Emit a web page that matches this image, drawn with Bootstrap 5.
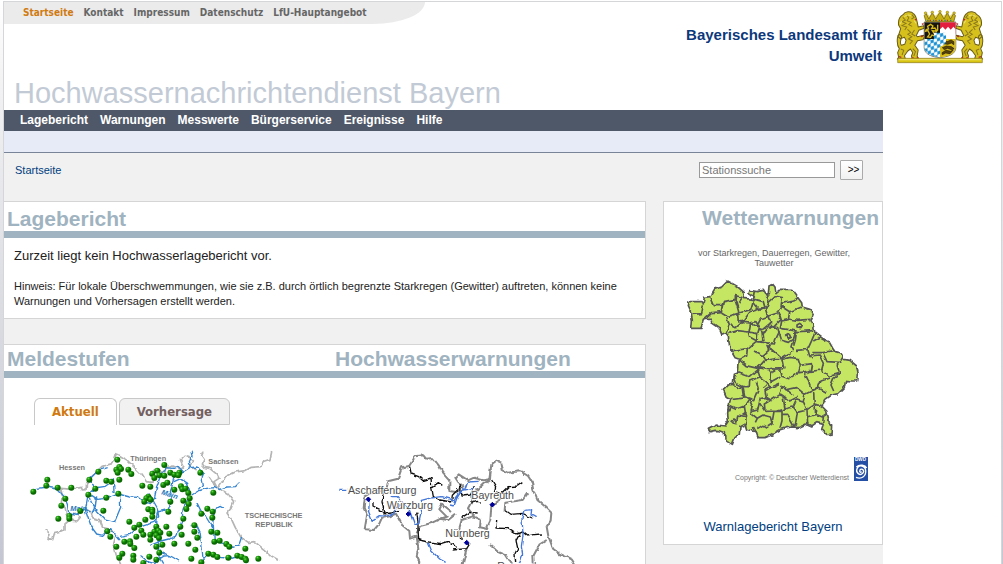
<!DOCTYPE html>
<html lang="de">
<head>
<meta charset="utf-8">
<meta name="viewport" content="width=device-width, initial-scale=1">
<title>Hochwassernachrichtendienst Bayern</title>
<link href="https://cdn.jsdelivr.net/npm/bootstrap@5.3.0/dist/css/bootstrap.min.css" rel="stylesheet">
<style>
body{font-family:"Liberation Sans",Arial,sans-serif;font-size:11px;line-height:15px;color:#222;background:linear-gradient(#fff,#f0f0f2 100px,#dcdde3 300px,#c4c6d2 564px)}
a{text-decoration:none}
svg{display:block;flex:none}
.shell{height:100vh;overflow:hidden;padding:1px 1px 0 3px}
.sheet{min-height:100%;border:1px solid #d5d6d8;border-bottom:0;background:#fff}
.side{width:118px;flex:none}
.masthead{height:108px}
.emblem{padding:8px 0 0 13px}
.meta{width:421px;height:22px;background:#ebebeb;border-bottom-right-radius:52px 22px;padding-left:19px;gap:10px;font:bold 10px/22px "DejaVu Sans Condensed","DejaVu Sans",sans-serif}
.meta a{color:#666}
.meta a.current,.tabs button.current{color:#d07a10}
.title{font-size:29px;line-height:34px;color:#c2cad5;margin:0;padding-left:10px;font-weight:400}
.agency{width:210px;font-size:15px;line-height:21px;font-weight:700;color:#0d387c;padding-top:22px;padding-right:1px}
.menu{background:#4f5869;height:21px;padding-left:16px;gap:12px;font:bold 12px/20px "Liberation Sans",Arial,sans-serif}
.menu a{color:#fff}
.submenu{height:22px;background:#e7ebf7;border-bottom:1px solid #7a8499}
.workspace{background:#f1f1f1}
.crumbs{height:48px;padding:7px 20px 0 11px}
.crumbs a{padding-top:3px}
.crumbs a,.report{color:#004080}
.crumbs input{width:136px;height:16px;border:1px solid #999;padding:0 2px;font-size:11px;line-height:14px;border-radius:0;background:#fff}
.crumbs input::placeholder{color:#777}
.crumbs button{width:23px;height:20px;border:1px solid #aaa;border-radius:1px;background:linear-gradient(#fff,#f1f1f1);padding:0 0 0 4px;font-size:10px;line-height:18px;color:#000}
.board{gap:17px}
.primary{gap:25px;min-width:0}
.panel{background:#fff;border:1px solid #d5d5d5;border-left:0}
.panel h2,.weather h2{font-size:21px;line-height:24px;font-weight:700;color:#9fb3c0;margin:0}
.strip{border-bottom:7px solid #9fb3c0;padding:2px 3px 0}
.strip.tall{padding-top:5px}
.strip h2:first-child{flex:none;width:328px}
.message{padding:10px 10px 0;height:80px}
.message p{margin:0 0 15px}
.message .lead-line{font-size:13px;line-height:16px}
.weather{width:220px;flex:none;height:344px;border:1px solid #d5d5d5;background:#fff}
.weather h2{padding:4px 3px 0}
.weather .hint{font-size:9px;line-height:10px;color:#666;margin:18px 20px 3px;width:180px}
.copy{font-size:7px;line-height:6px;color:#777;margin-top:1px;padding-right:14px;gap:5px}
.report{font-size:13px;line-height:16px;margin-top:38px}
.tabs{padding:20px 30px 0;gap:2px}
.tabs button{height:27px;border:1px solid #c8c8c8;border-radius:6px 6px 0 0;background:#f1f1f1;color:#73605f;padding:0 17px;font:bold 13px/24px "DejaVu Sans Condensed","DejaVu Sans",sans-serif}
.tabs button.current{background:#fff;border-bottom:0}
.maps{padding:10px 0 0 16px;gap:10px}
</style>
</head>
<body>
<div class="shell"><div class="sheet">
<header class="masthead d-flex">
 <div class="flex-grow-1 d-flex justify-content-between">
  <div class="d-flex flex-column">
   <nav class="meta d-flex" aria-label="Service"><a class="current" href="#">Startseite</a><a href="#">Kontakt</a><a href="#">Impressum</a><a href="#">Datenschutz</a><a href="#">LfU-Hauptangebot</a></nav>
   <h1 class="title mt-auto text-nowrap">Hochwassernachrichtendienst Bayern</h1>
  </div>
  <div class="agency text-end">Bayerisches Landesamt für Umwelt</div>
 </div>
 <div class="side emblem">
  <svg width="88" height="54" viewBox="50 26 262 162" preserveAspectRatio="none" role="img" aria-label="Bayerisches Staatswappen">
   <defs><pattern id="rauten" width="12" height="16" patternUnits="userSpaceOnUse" patternTransform="rotate(35)"><path fill="#fff" d="M0 0h12v16H0z"/><path fill="#1b91d2" d="M6 0l6 8-6 8-6-8z"/></pattern>
   <g id="lion"><path d="M116 76C112 60 112 45 103 38 94 27 76 31 71 40 59 47 56 60 58 72l6 10-4 12-4 12 7 6 12-4 5 9-4 12-10 3c-6-6-2-14 0-22 2-10-10-14-11-4-3 16-2 26 5 36l-5 12 3 14-4 5h24l-3-10 10-14 8-6 7 11-4 10 3 9h18l-4-9 3-18-10-14 8-14 16-3 6-9-4-4-18 4-4-3 8-16 16-6-1-8-17 4z" fill="#d6c01c" stroke="#6b5d1a" stroke-width="3" stroke-linejoin="round"/><path d="M70 48l8 8-10 5 12 5-12 7 14 4-6 9M82 40l6 10-5 8 12 5-7 7 10 5M97 40l7 8-8 5M84 84l10 9-9 6 12 7-10 7 12 6-8 9M64 143l9 4-5 14M100 142l8 9-5 13M105 86l-8 12 10 6" fill="none" stroke="#8a7822" stroke-width="3"/><path d="M75 46c7-6 14-6 20-2M62 68l5-8M104 58l6 8" fill="none" stroke="#eee06b" stroke-width="3"/><path d="M106 54l6 2M127 69l5-2M124 106l6-2M59 166l7 2M95 171l8-1M112 168l5 2" stroke="#b92b24" stroke-width="4"/></g></defs>
   <use href="#lion"/><use href="#lion" transform="matrix(-1 0 0 1 362 0)"/>
   <path d="M55 171h252v13H55z" fill="#d8c512" stroke="#8a7822" stroke-width="2"/>
   <path d="M58 175h246" stroke="#f1e57d" stroke-width="3"/>
   <path d="M134 62h94v76c0 17-15 28-47 31-32-3-47-14-47-31z" fill="#fff" stroke="#4c4628" stroke-width="2"/>
   <path d="M135 63h46v50h-46z" fill="#171511"/><path d="M181 63h46v34h-46z" fill="#e51b3d"/><path d="M181 97V84l8-8 8 9 8-9 8 9 8-9 6 8v29h-46z" fill="#fff"/>
   <path d="M135 113h46v55c-29-3-46-13-46-30z" fill="url(#rauten)"/><path d="M181 113h46v25c0 17-14 27-46 30z" fill="#d9bd17"/>
   <path d="M144 75l9-6 7 5-4 7 10-1 5 7-6 2-7-1 6 9 9 2-3 6-13-4-4 7-9-1 6-9-5-10-7 2 2-5 7-2zM174 70v16l-6 7" fill="none" stroke="#d7b91b" stroke-width="4"/>
   <path d="M185 123l10-6 7 4 12-5 8 5v9l-7-5-11 4-12-2zM188 139l12-5 15 2 8 6-7 3-13-4-9 4zM187 154l12-7 14 3 7-4-9 11-13-2-10 5z" fill="#57440a" stroke="#221b08" stroke-width="2"/>
   <path d="M163 94h36v22c0 12-8 17-18 20-10-3-18-8-18-20z" fill="url(#rauten)"/>
   <path d="M139 61l-5-18 8-7 8 8 8-10 10 9 12-11 12 11 10-9 8 10 9-8 8 7-5 18z" fill="#e6d56c"/><path d="M139 61l-5-18 5-7 9 17 10-19 10 19 13-21 12 21 10-19 9 19 10-17 5 7-5 18z" fill="#c8b210" stroke="#66551a" stroke-width="2"/>
   <path d="M143 57h76" stroke="#157d97" stroke-width="4" stroke-dasharray="4 13"/><path d="M150 57h65" stroke="#bf2d25" stroke-width="4" stroke-dasharray="4 13"/>
   <g fill="#d6c113" stroke="#66551a"><circle cx="138" cy="35" r="4"/><circle cx="158" cy="33" r="4"/><circle cx="181" cy="31" r="4"/><circle cx="203" cy="33" r="4"/><circle cx="223" cy="35" r="4"/></g>
  </svg>
 </div>
</header>
<div class="d-flex">
<div class="flex-grow-1" style="min-width:0">
 <nav class="menu d-flex" aria-label="Hauptmenü"><a href="#">Lagebericht</a><a href="#">Warnungen</a><a href="#">Messwerte</a><a href="#">Bürgerservice</a><a href="#">Ereignisse</a><a href="#">Hilfe</a></nav>
 <div class="submenu"></div>
 <div class="workspace">
  <div class="crumbs d-flex justify-content-between align-items-start"><a href="#">Startseite</a>
   <form class="d-flex align-items-center" style="gap:5px"><input type="text" placeholder="Stationssuche" aria-label="Stationssuche"><button type="button">&gt;&gt;</button></form></div>
  <div class="board d-flex align-items-start pb-5">
   <main class="primary flex-grow-1 d-flex flex-column">
    <section class="panel"><div class="strip tall"><h2>Lagebericht</h2></div>
     <div class="message"><p class="lead-line">Zurzeit liegt kein Hochwasserlagebericht vor.</p><p>Hinweis: Für lokale Überschwemmungen, wie sie z.B. durch örtlich begrenzte Starkregen (Gewitter) auftreten, können keine Warnungen und Vorhersagen erstellt werden.</p></div></section>
    <section class="panel"><div class="strip d-flex"><h2>Meldestufen</h2><h2>Hochwasserwarnungen</h2></div>
     <div class="tabs d-flex"><button type="button" class="current">Aktuell</button><button type="button">Vorhersage</button></div>
     <div class="maps d-flex">
      <svg width="300" height="150" viewBox="0 0 900 450" fill="none" stroke-linejoin="round" role="img" aria-label="Karte Meldestufen">
       <defs><filter id="rough" x="-5%" y="-5%" width="110%" height="110%"><feTurbulence type="fractalNoise" baseFrequency=".05" numOctaves="2" seed="4"/><feDisplacementMap in="SourceGraphic" scale="12" xChannelSelector="R" yChannelSelector="G"/></filter>
       <radialGradient id="green" cx=".35" cy=".3"><stop stop-color="#6bd350"/><stop offset=".45" stop-color="#1c9b0c"/><stop offset="1" stop-color="#0a6802"/></radialGradient></defs>
       <g filter="url(#rough)"><g stroke="#b4b4b4" stroke-width="5">
        <path d="M76 284l14 12-6 14 14 4 5-18 21-5 11-6 0-18 14-12 23 3 9-11-16-9-25 2-4-20-12-18 3-20-5-22 35 3 27-6 3 8 11-1 2-17 14-21 32-32 30-8 10-30 12 5 23 14 25 25 20 20 13 20 20 2 4-14-10-12 10-12 30 6 14-18-4 9 16-8 24 10 8-8-10-20 12-12 16 4 12 12-10 16 16 10M550 50l-5 12 8 12-6 13 9 11 13 2 22 18 6 12-15 10 10 20 8-10 16-24 30-15 30-4 18-10 28-2 10-16 18-6 5-22M567 127l20 28 22 15 20 12 12 18-8 20-12 14 14 20 11 24 17 29 22 15 18-2 29 23 21 19 24 14"/>
        <path d="M212 230l6 18 20 6 10 24 28 6 12 16-8 30 8 28 14 30M212 230l-15-8"/>
       </g><g stroke="#3484d0" stroke-width="4">
        <path d="M32 175l20-15 28-4 32 6 20 22 10 24 4 28 25 5 10-13 14-6 21 12 10-20 4-30M206 135l28-28 29-9M206 135l18 24 32-5 22-16M224 159l-20 20 10 23 15 25 23 24 32 9 18-43-2-42-18-3-2-45M215 181l18 12 28-3 34-13 34 9 28 1 18 15 16 4 12-15 8-38 12-36 15-19 22 2 14-6 16 16M204 180l-8 45 16 48 18 24 18 4 12-12 12-8 28 34M300 304l28-6 28-24 46-15 14-14-4-26-17-30-14-12M410 282l5 42 2 42 11 20M412 282l-5-17 5-34 33-8 10-26-4-28 11-42M462 140l20-9 21 14 6 24-8 28-12 26-2 28-7 28-14 25-20 8-24 6-31 13M513 50l3 12-8 18 7 17-22 14-16 5M514 98l17-2 20 19-7 18 3 16-12 14M515 180l20-12 25-8 24-2 12 6 24-8 26-1 12-12M530 202l12 24 16 20 20 32 2-38 8-18 12-8 15 8M580 270l3 50 36 8 20 9 18-8 8-24M512 272l20 2 8 17 6 45 4 45M545 378l19-23 32 12 32 2 28-8 17 10 8 16M405 330l22 22 30 14 20 12M360 362l18 16 27 7 15-14 12-8 16-1"/></g></g>
       <g fill="#777" stroke="none" font-size="22" font-weight="bold"><text x="117" y="106">Hessen</text><text x="331" y="79">Thüringen</text><text x="565" y="87">Sachsen</text><text x="674" y="248">TSCHECHISCHE</text><text x="706" y="277">REPUBLIK</text><g fill="#2777ba" font-style="italic"><text x="151" y="228">Main</text><text x="423" y="178" transform="rotate(17 423 178)">Main</text></g></g>
       <g id="stations" fill="url(#green)"></g>
      </svg>
      <svg width="260" height="145" viewBox="0 -15 780 435" fill="none" stroke-linejoin="round" role="img" aria-label="Karte Hochwasserwarnungen">
       <g filter="url(#rough)"><g stroke="#888" stroke-width="6">
        <path d="M105 170l-4 34 10 22-7 42 28 2 16-19 8-18 24-4 18-8 18 34 22 18 2 23 20-6 5 34-5 24 8 18-4 24 18 18M105 170l32-18 32-2 5-26 30-8 12-34 22-5 18-28 24-3 8 10 21-2 17 22 10 18 22 25 0 34 24 4 6-8 12-10-16-14-8-12 10-10 28 18 18-8 28 8 18-3 6-44 16-12 14 6 4 22 14 8 40-4 22 14 12 18 4 24 12 30 26 22 16 16-2 24-12 18 5 28 14 38 18 14 38 18 18 28 9 24 16 28"/>
        <path d="M482 88l-2 30-20 14-18 18-16 10 2 19-14 26 18 24 20 10-2 23 20 4 11-24 3-45 28-18M592 160l-14 20-52 8-2 22M650 300l-22 14-18 34 2 38M260 280l10-22 32-8 30-14 18-6-22-22 8-14 27 22M330 236l24 5 24-20M385 275l10-35 38-12M480 315l26 22 21 9 26 40M410 325l-12 48"/></g>
        <g stroke="#111" stroke-width="4"><path d="M239 80l5 22 22 8 13 12 24-8 2 28 5 28 20 10 34 6 3-20 18-18M305 142l20-14 12 8M160 156l-4 30 10 34-17-12-20-10 0-12M160 222l24-3 20-8M260 218l4 28 0 22 2 32 30 6 36 5 20-6 28 17M485 120l12 20-4 14 24 6 20-20 26-2 14-10M390 132l6 36 25-3 12-24M422 190l20-6 10 3M500 240l-2 24 36 2 24 16 20-6 15 12 20-4 20-2M525 210l18 13 35-3 28 14M568 284l-10 18 5 22-8 17 2 25M395 233l24-16 24 2M385 278l12 22M368 330l42-4 10-16"/></g>
        <g stroke="#4377d8" stroke-width="4"><path d="M28 148h24M118 181l-2 34 10 26 22-14 20 2 24-8 2-15 18-13M185 170l20 0 8 12 26 30 14 40 14-5 7-31 0-35 23-6 39-5 35 10 14-18 20-16 7-20 34-2M295 308l10 25 24 24 18 10M360 195l12 3 8-22 14-24 36-7M568 372l10-28-4-24 5-36-3-50 6-23 23-2-2 16 14 8"/></g></g>
       <g fill="#4d4d4d" stroke="#fff" stroke-width="5" paint-order="stroke" font-size="32"><text x="54" y="161">Aschaffenburg</text><text x="170" y="206">Würzburg</text><text x="424" y="176">Bayreuth</text><text x="346" y="290">Nürnberg</text><text x="502" y="389">Regensburg</text></g>
       <path d="M115 171l7 7-7 7-7-7zM235 215l7 7-7 7-7-7zM487 187l7 7-7 7-7-7zM410 301l7 7-7 7-7-7z" fill="#00009b" stroke="#00009b" stroke-width="3"/>
      </svg>
     </div></section>
   </main>
   <aside class="weather"><h2 class="text-end">Wetterwarnungen</h2><p class="hint text-center">vor Starkregen, Dauerregen, Gewitter, Tauwetter</p>
    <svg width="200" height="185" viewBox="-33 0 600 555" role="img" aria-label="Wetterwarnkarte Bayern">
     <g filter="url(#rough)" stroke="#555" stroke-width="5" stroke-linejoin="round">
      <path fill="#c5e663" d="M120 55l20-7 18-18 27 15 23 20-2 17 26 3 6-7-16-10 3-10 20 4 20-4 7 12 8-2 2-23 10-7 8 10 3 17 12-10h35l10 13 10 14 10 13 2 13 23 7 10 13-7 20 7 17 5 20 20 15 22 12 13 23 7 10 18 5 8 15 17 3 20 17 5 25-2 20h-18l-18-2-4 22-18 18-20 4-18 13-7 15-5 5 15 15 5 20-5 10 15 12-2 28h-13l-15-15 5-15-20-5-15 10-15-7-25 12-15-2-20 2-17 5-18 10-10 7-20 8h-20l-5-15-10-5-20-5-5-15-15 8-2 22-13 10-8 20-12-8-10-7-2-20-13-5-15-2-15 4-5-7 25-13 25 3 10-15-2-20 2-30 5-15-10-5-10-25 13-13 17-2 3-30 12-5 3-40-13-5-15-25-5-40-8-10-12 5-8-20-22-15-2-10H90l-5 3-7 24H50l2-25-5-25-7-15 2-15h36l7 5 3-18 17-2 15-25z"/>
      <path fill="none" d="M85 100l-5 28-30 2M105 80l10 24 25 0 6-12 35-7 0-11 25 7M90 145l22-20 27-3 6-30M180 87l7 21 5 18-32 10-20-12M192 126l35-10 8-28M200 82l-10 16M188 126l2 27 15-3 20-27 45-13-5-18-31-8 4-24M235 97l12 15 25-2M272 68l10 26 22-20M282 94l-10 22 6 20 30-10 10-20 4-26-19-4M318 98l35-8 17-10M318 106l26 16 36-14M344 122l-4 24-20 4-8-24M340 144l28 4 38-3M155 140l8 20-10 28M163 160l20 10 18-16 24 2 20 10 12-22 22-8 8 20-22 18-12 2M160 188l28-9 34 4 5-28M225 156l18-4 10 18-5 18-26-5M248 188l-2 22-22-12-4-15 M252 170l8 10 4 28-18 3M264 190l20-24 24 4 4 14-10 21-4 14-28-4M286 170l14-6 18-18M320 150l-4 22 26 4 28 6 45-3M312 184l8 24 20 6 16-12 8-24M356 202l-8 25 6 12M365 178l-4 30-5 16M420 185l-10 24-12 26-35 3M398 235l6 20 8 10M415 210l22-12M412 245l32 0 30-6M444 246l12 26 38 2 10-16M165 240l30-4 22-3 27-22 28 5 9 22-18 16-26-14M217 233l-2 22-24 12M263 252l8 14-23 26-35-8-18-16M281 236l12-22M282 214l6 20 32 28 34-22M271 268l30-5 20 0 6 30-50 2-29-6M320 265l26-6 24 4 6 20 35-5M376 283l-6 22-28 18-24-8-4-22M370 305l18-2 10 22 12 30 24-6M410 278l-4 22-14 6M408 255l25-3 12 25-5 20-34 4M440 300l24 16 30-9-8-25M486 282l10-12M494 310l-18 12-8 20 8 18M468 320l-30 10-8 20 24 14M432 350l-22 10-20 10-25-20-34 7M190 305l35 12 28-24M248 290l6 28-30 12-1 17-20 0-18-8-8-24M175 340l12 12 14-5 5 34-38 5M203 345l6 32 27 9 14-33-6-20M254 318l19 13 16 18 26-12M289 304l-1 28 30-16M289 349l-19 10 4 20-18 4-8 34-17 4M265 352l10-8M274 379l14 8 24-16 6-25 18 11 16 14M312 371l12 4 6 39-22 6-38 1-16-24M270 421l-2-22 20-12M324 375l20 15 24-12M330 414l25-6 9-20M355 408l12 16-6 38-12 5M160 405l22 10 26-10 14-22M208 405l5 32-25-5-4 31M213 437l-1 31M222 383l10 23-5 20 20 16-6 12M247 442l17-10 22 6 5 18-18 12-10-5-16 10M291 456l6-35 24 0 0 28-6 22M321 430l17 0 12 20 10 19M366 424l30-7 2 42M364 386l22 8 10 22 24-16 20 4M390 370l-6 24M416 364l2 37M420 400l2 30-26 8M422 430l20 8 16-10M445 438l-2 18M235 468l10 18"/>
      <path fill="none" d="M366 162l8-5 8 6-4 7-12-2zM335 195l8-5 4 8-7 4zM170 449l7-5 9 5-7 8zM158 413l8 0-4 7zM204 429l8-5 3 8zM283 297l9-5 7 8-10 5z"/>
     </g></svg>
    <div class="copy d-flex justify-content-end align-items-end"><span class="text-nowrap">Copyright: © Deutscher Wetterdienst</span><svg width="14" height="24" viewBox="0 0 42 72" fill="none" aria-label="DWD"><path fill="#244fa4" d="M0 0h42v72H0z"/><text x="3" y="13" fill="#fff" font-size="14" font-weight="bold">DWD</text><path d="M6 61C24 68 37 56 35 40 33 24 14 23 9 35 4 48 18 57 26 49c8-9-3-17-8-10-3 6 2 9 5 5M7 30C18 20 34 25 38 33" stroke="#fff" stroke-width="4"/></svg></div>
    <a class="report d-block text-center" href="#">Warnlagebericht Bayern</a>
   </aside>
  </div>
 </div>
</div>
<div class="side"></div>
</div>
</div></div>
<script>
const stations=[[40,170],[82,134],[79,152],[113,158],[154,158],[136,191],[124,212],[115,251],[148,243],[148,251],[181,228],[208,134],[235,110],[226,161],[205,179],[259,188],[250,227],[295,176],[292,74],[298,96],[289,104],[303,102],[293,113],[325,104],[334,117],[298,134],[259,137],[274,140],[262,289],[271,305],[289,335],[307,356],[298,368],[328,260],[313,320],[330,319],[331,327],[343,339],[340,362],[340,374],[343,278],[358,269],[364,287],[370,299],[376,254],[349,305],[367,152],[391,155],[385,185],[379,190],[392,194],[373,200],[385,223],[397,224],[397,231],[397,245],[409,275],[403,290],[415,287],[421,293],[391,299],[391,314],[409,301],[417,309],[397,116],[412,107],[418,121],[403,129],[433,90],[451,113],[433,122],[463,119],[478,113],[475,121],[430,150],[442,143],[463,164],[483,154],[487,163],[497,161],[505,174],[509,190],[490,197],[506,207],[499,222],[451,200],[445,230],[490,251],[439,275],[448,296],[481,275],[485,299],[409,335],[427,329],[418,353],[388,365],[409,374],[370,384],[463,326],[505,326],[514,371],[541,113],[580,173],[544,236],[562,221],[578,230],[577,248],[523,271],[523,290],[532,308],[574,290],[592,293],[583,320],[599,317],[619,327],[628,335],[526,344],[565,356],[580,359],[592,366],[625,368],[652,362],[665,366],[676,371],[678,376],[715,371],[676,341],[544,382]];
document.getElementById('stations').innerHTML=stations.map(([x,y])=>`<circle cx="${x}" cy="${y}" r="9"/>`).join('');
</script>
<script src="https://cdn.jsdelivr.net/npm/bootstrap@5.3.0/dist/js/bootstrap.bundle.min.js"></script>
</body>
</html>
